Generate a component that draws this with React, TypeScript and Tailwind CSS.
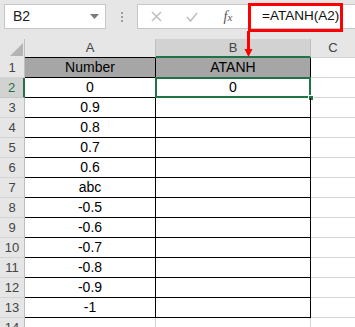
import React from "react";

const values = ["0", "0.9", "0.8", "0.7", "0.6", "abc", "-0.5", "-0.6", "-0.7", "-0.8", "-0.9", "-1"];

function RowHeader({ n, active }: { n: number; active?: boolean }) {
  return (
    <div
      className={
        "w-[25px] shrink-0 flex items-center justify-center text-[13px] border-b " +
        (active
          ? "bg-[#d2d2d2] text-[#217346] border-r-2 border-r-[#217346] border-b-[#c6c6c6]"
          : "bg-[#e6e6e6] text-[#444] border-r border-r-[#bfbfbf] border-b-[#d4d4d4]")
      }
    >
      {n}
    </div>
  );
}

export default function App() {
  return (
    <div className="relative w-[355px] h-[327px] overflow-hidden bg-white font-['Liberation_Sans',sans-serif] text-black">
      {/* formula bar */}
      <div className="h-[39px] bg-[#e6e6e6] flex items-start pt-[4px] pl-[4px]">
        <div className="w-[102px] h-[25px] bg-white border border-[#c6c6c6] flex items-center justify-between pl-[8px] pr-[6px]">
          <span className="text-[14px] text-[#222]">B2</span>
          <svg width="9" height="5" viewBox="0 0 9 5">
            <path d="M0 0 L9 0 L4.5 5 Z" fill="#7a7a7a" />
          </svg>
        </div>
        <div className="w-[31px] h-[25px] flex flex-col items-center justify-center gap-[2px]">
          <span className="w-[2px] h-[2px] bg-[#9e9e9e]" />
          <span className="w-[2px] h-[2px] bg-[#9e9e9e]" />
          <span className="w-[2px] h-[2px] bg-[#9e9e9e]" />
        </div>
        <div className="flex-1 h-[25px] bg-white border border-[#c6c6c6] border-r-0 flex items-center">
          <div className="w-[36px] flex justify-center">
            <svg width="11" height="11" viewBox="0 0 11 11">
              <path d="M1 1 L10 10 M10 1 L1 10" stroke="#c0c0c0" strokeWidth="1.6" />
            </svg>
          </div>
          <div className="w-[36px] flex justify-center">
            <svg width="12" height="10" viewBox="0 0 12 10">
              <path d="M1 5 L4.5 9 L11 1" stroke="#c0c0c0" strokeWidth="1.6" fill="none" />
            </svg>
          </div>
          <div className="w-[36px] flex justify-center">
            <span className="font-['Liberation_Serif',serif] italic text-[14px] text-[#555]">
              f<span className="text-[11px]">x</span>
            </span>
          </div>
          <span className="ml-[16px] text-[13.5px] text-[#111]">=ATANH(A2)</span>
        </div>
      </div>

      {/* column headers */}
      <div className="flex h-[19px] text-[13px] text-[#444]">
        <div className="w-[25px] shrink-0 bg-[#e6e6e6] border-r border-[#bfbfbf] relative">
          <svg className="absolute left-[10px] top-[4px]" width="13" height="13" viewBox="0 0 13 13">
            <path d="M13 0 L13 13 L0 13 Z" fill="#b4b4b4" />
          </svg>
        </div>
        <div className="w-[131px] shrink-0 bg-[#e6e6e6] border-b border-black border-r border-r-[#bfbfbf] flex items-center justify-center">
          A
        </div>
        <div className="w-[155px] shrink-0 bg-[#d2d2d2] border-b-2 border-[#217346] border-r border-r-[#bfbfbf] flex items-center justify-center">
          B
        </div>
        <div className="flex-1 bg-[#e6e6e6] border-b border-[#d4d4d4] flex items-center justify-center">C</div>
      </div>

      {/* row 1 */}
      <div className="flex h-[20px] text-[14px]">
        <RowHeader n={1} />
        <div className="w-[131px] shrink-0 bg-[#a6a6a6] border-r border-b border-black flex items-center justify-center">
          Number
        </div>
        <div className="w-[155px] shrink-0 bg-[#a6a6a6] border-r border-b border-black flex items-center justify-center">
          ATANH
        </div>
        <div className="flex-1 border-b border-[#d4d4d4]" />
      </div>

      {/* rows 2-14 */}
      {values.map((v, i) => (
        <div key={i} className="flex h-[20px] text-[14px]">
          <RowHeader n={i + 2} active={i === 0} />
          <div className="w-[131px] shrink-0 border-r border-b border-black flex items-center justify-center">
            {v}
          </div>
          <div className="w-[155px] shrink-0 border-r border-b border-black flex items-center justify-center relative">
            {i === 0 && (
              <>
                <span>0</span>
                <div className="absolute -left-[1px] -top-[1px] -right-[1px] -bottom-[1px] border-2 border-[#217346]" />
                <div className="absolute -right-[4px] -bottom-[4px] w-[6px] h-[6px] bg-[#217346] border border-white" />
              </>
            )}
          </div>
          <div className="flex-1 border-b border-[#d4d4d4]" />
        </div>
      ))}
      <div className="flex h-[20px] text-[14px]">
        <RowHeader n={14} />
        <div className="w-[131px] shrink-0 border-r border-[#d4d4d4]" />
        <div className="w-[155px] shrink-0 border-r border-[#d4d4d4]" />
        <div className="flex-1" />
      </div>

      {/* red annotation */}
      <div className="absolute left-[248px] top-[3px] w-[95px] h-[29px] border-[3px] border-[#f00]" />
      <svg className="absolute left-[243px] top-[31px]" width="11" height="27" viewBox="0 0 11 27">
        <path d="M5.5 0 L5.5 19" stroke="#f00" strokeWidth="3" />
        <path d="M1.5 18 L9.5 18 L5.5 26 Z" fill="#f00" />
      </svg>
    </div>
  );
}
